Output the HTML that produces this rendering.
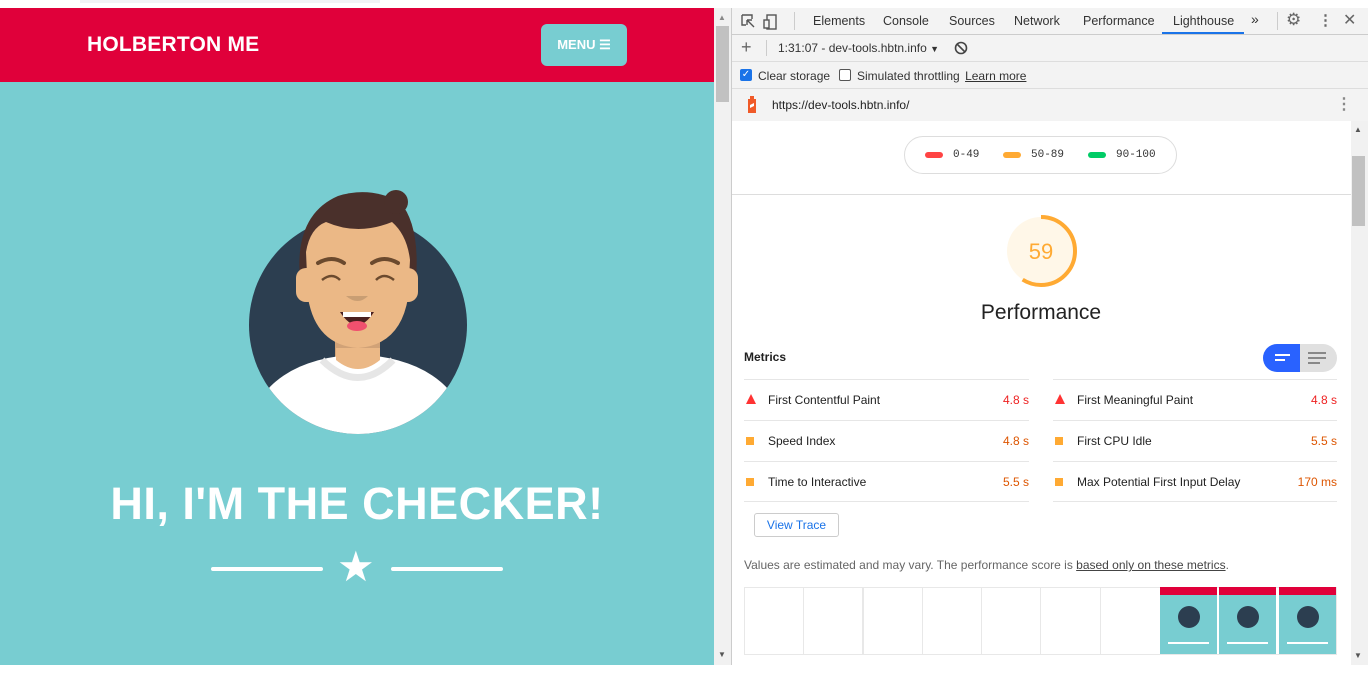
<!DOCTYPE html>
<html><head><meta charset="utf-8"><style>
*{margin:0;padding:0;box-sizing:border-box}
body{width:1368px;height:683px;overflow:hidden;background:#fff;font-family:"Liberation Sans",Arial,sans-serif;position:relative}
.a{position:absolute}
.tab{position:absolute;top:14px;font-size:12.5px;color:#333}
.mrow{position:absolute;height:41px;border-top:1px solid #e6e6e6;font-size:12px;color:#212121}
.mrow span{position:absolute;top:13px}
.tri{width:0;height:0;border-left:5px solid transparent;border-right:5px solid transparent;border-bottom:10px solid #f33;position:absolute;top:14px;left:2px}
.sq{width:8px;height:8px;background:#fa3;position:absolute;top:16px;left:2px}
.fr{position:absolute;top:587px;height:68px;border:1px solid #e8e8e8;background:#fff}
.th{position:absolute;top:587px;width:57px;height:67px;background:#78cdd1}
.th .h{height:8px;background:#e0003a}
</style></head><body>
<div class="a" style="left:0;top:0;width:715px;height:8px;background:#fff"></div>
<div class="a" style="left:80px;top:0;width:300px;height:3px;background:#f2f3f5"></div>
<div class="a" style="left:0;top:8px;width:714px;height:74px;background:#e0003a"></div>
<div class="a" style="left:87px;top:33px;color:#fff;font-weight:bold;font-size:21px;letter-spacing:0.2px">HOLBERTON ME</div>
<div class="a" style="left:541px;top:24px;width:86px;height:42px;background:#78cdd1;border-radius:6px;color:#fff;font-weight:bold;font-size:13px;line-height:42px;text-align:center">MENU &#9776;</div>
<div class="a" style="left:0;top:82px;width:714px;height:583px;background:#78cdd1"></div>
<svg class="a" style="left:240px;top:180px" width="240" height="260" viewBox="0 0 240 260">
<defs><clipPath id="c"><circle cx="118" cy="145" r="109"/></clipPath></defs>
<circle cx="118" cy="145" r="109" fill="#2c3e50"/>
<g clip-path="url(#c)">
<rect x="95" y="150" width="45" height="40" fill="#d1a277"/>
<ellipse cx="118" cy="245" rx="105" ry="70" fill="#fff"/>
<path d="M82 180 Q118 215 153 180" stroke="#e6e6e6" stroke-width="7" fill="none"/>
<path d="M96 180 Q118 198 140 180 L140 168 L96 168Z" fill="#ebb886"/>
</g>
<path d="M60 100 Q54 35 98 16 Q130 6 160 22 Q180 45 176 100 Z" fill="#4a302b"/>
<circle cx="156" cy="22" r="12" fill="#4a302b"/>
<rect x="56" y="88" width="22" height="34" rx="10" fill="#ebb886"/>
<rect x="156" y="88" width="22" height="34" rx="10" fill="#ebb886"/>
<path d="M66 72 Q70 48 86 42 Q118 56 152 42 Q167 55 170 80 L168 118 Q160 165 118 168 Q76 165 68 118Z" fill="#ebb886"/>
<path d="M78 83 Q92 75 104 83" stroke="#6b4a2e" stroke-width="4" fill="none" stroke-linecap="round"/>
<path d="M132 83 Q144 75 158 83" stroke="#6b4a2e" stroke-width="4" fill="none" stroke-linecap="round"/>
<path d="M82 100 Q92 92 100 100" stroke="#6b4a2e" stroke-width="2.5" fill="none"/>
<path d="M136 100 Q144 92 154 100" stroke="#6b4a2e" stroke-width="2.5" fill="none"/>
<path d="M106 116 Q118 126 128 116Z" fill="#c99e73"/>
<path d="M100 132 Q117 158 134 132Z" fill="#4a1f1f"/>
<rect x="103" y="132" width="28" height="5" fill="#fff"/>
<ellipse cx="117" cy="146" rx="10" ry="5" fill="#f0506e"/>
</svg>
<div class="a" style="left:0;top:478px;width:714px;text-align:center;color:#fff;font-weight:bold;font-size:45px;letter-spacing:0.5px">HI, I'M THE CHECKER!</div>
<div class="a" style="left:211px;top:567px;width:112px;height:4px;background:#fff;border-radius:2px"></div>
<div class="a" style="left:391px;top:567px;width:112px;height:4px;background:#fff;border-radius:2px"></div>
<div class="a" style="left:337px;top:546px;color:#fff;font-size:42px;line-height:42px">&#9733;</div>
<div class="a" style="left:714px;top:8px;width:17px;height:657px;background:#f1f1f1"></div>
<div class="a" style="left:716px;top:26px;width:13px;height:76px;background:#c1c1c1"></div>
<div class="a" style="left:718px;top:13px;font-size:8px;color:#888">&#9650;</div>
<div class="a" style="left:718px;top:650px;font-size:8px;color:#555">&#9660;</div>
<div class="a" style="left:731px;top:8px;width:1px;height:657px;background:#ccc"></div>
<div class="a" style="left:732px;top:8px;width:636px;height:27px;background:#f3f3f3;border-bottom:1px solid #ccc"></div>
<svg class="a" style="left:740px;top:13px" width="40" height="18"><path d="M2 2h10v4M2 2v10h4M7 7l7 7M7 7h5M7 7v5" stroke="#555" stroke-width="1.4" fill="none"/><rect x="27" y="2" width="9" height="14" fill="none" stroke="#555" stroke-width="1.4"/><rect x="24" y="7" width="5" height="8" fill="#f3f3f3" stroke="#555" stroke-width="1.4"/></svg>
<div class="a" style="left:794px;top:12px;width:1px;height:18px;background:#ccc"></div>
<div class="tab" style="left:813px">Elements</div>
<div class="tab" style="left:883px">Console</div>
<div class="tab" style="left:949px">Sources</div>
<div class="tab" style="left:1014px">Network</div>
<div class="tab" style="left:1083px">Performance</div>
<div class="tab" style="left:1173px">Lighthouse</div>
<div class="a" style="left:1162px;top:32px;width:82px;height:2px;background:#1a73e8"></div>
<div class="tab" style="left:1251px;top:11px;font-size:14px">&raquo;</div>
<div class="a" style="left:1277px;top:12px;width:1px;height:18px;background:#ccc"></div>
<div class="tab" style="left:1286px;top:10px;font-size:17px;color:#666">&#9881;</div>
<div class="tab" style="left:1318px;top:11px;font-size:15px;color:#666;font-weight:bold">&#8942;</div>
<div class="tab" style="left:1343px;top:10px;font-size:16px;color:#666">&#10005;</div>
<div class="a" style="left:732px;top:35px;width:636px;height:27px;background:#f3f3f3;border-bottom:1px solid #ddd"></div>
<div class="a" style="left:741px;top:37px;font-size:18px;color:#666">+</div>
<div class="a" style="left:766px;top:40px;width:1px;height:16px;background:#ccc"></div>
<div class="a" style="left:778px;top:41px;font-size:12px;color:#333">1:31:07 - dev-tools.hbtn.info <span style="font-size:9px">&#9660;</span></div>
<svg class="a" style="left:954px;top:41px" width="14" height="14"><circle cx="7" cy="7" r="5.5" stroke="#444" stroke-width="1.6" fill="none"/><path d="M3 3l8 8" stroke="#444" stroke-width="1.6"/></svg>
<div class="a" style="left:732px;top:62px;width:636px;height:27px;background:#f3f3f3;border-bottom:1px solid #ddd"></div>
<div class="a" style="left:740px;top:69px;width:12px;height:12px;background:#1a73e8;border-radius:2px;color:#fff;font-size:10px;line-height:12px;text-align:center">&#10003;</div>
<div class="a" style="left:758px;top:69px;font-size:12px;color:#333">Clear storage</div>
<div class="a" style="left:839px;top:69px;width:12px;height:12px;border:1px solid #555;border-radius:2px;background:#fff"></div>
<div class="a" style="left:857px;top:69px;font-size:12px;color:#333">Simulated throttling <span style="text-decoration:underline;margin-left:2px">Learn more</span></div>
<div class="a" style="left:732px;top:89px;width:636px;height:32px;background:#f3f3f3"></div>
<svg class="a" style="left:745px;top:95px" width="14" height="20"><rect x="3" y="4" width="8" height="14" fill="#f05a28"/><rect x="5" y="1" width="4" height="4" fill="#f05a28"/><path d="M5 10l4-2v3l-4 2z" fill="#fff"/></svg>
<div class="a" style="left:772px;top:98px;font-size:12px;color:#222">https://dev-tools.hbtn.info/</div>
<div class="a" style="left:1336px;top:94px;font-size:16px;color:#888;font-weight:bold">&#8942;</div>
<div class="a" style="left:1351px;top:121px;width:17px;height:544px;background:#f1f1f1"></div>
<div class="a" style="left:1352px;top:156px;width:13px;height:70px;background:#c1c1c1"></div>
<div class="a" style="left:1354px;top:125px;font-size:8px;color:#555">&#9650;</div>
<div class="a" style="left:1354px;top:651px;font-size:8px;color:#555">&#9660;</div>
<div class="a" style="left:904px;top:136px;width:273px;height:38px;border:1px solid #ddd;border-radius:19px"></div>
<div class="a" style="left:925px;top:152px;width:18px;height:6px;border-radius:3px;background:#f44"></div>
<div class="a" style="left:953px;top:149px;font-family:'Liberation Mono',monospace;font-size:11px;color:#333">0-49</div>
<div class="a" style="left:1003px;top:152px;width:18px;height:6px;border-radius:3px;background:#fa3"></div>
<div class="a" style="left:1031px;top:149px;font-family:'Liberation Mono',monospace;font-size:11px;color:#333">50-89</div>
<div class="a" style="left:1088px;top:152px;width:18px;height:6px;border-radius:3px;background:#0c6"></div>
<div class="a" style="left:1116px;top:149px;font-family:'Liberation Mono',monospace;font-size:11px;color:#333">90-100</div>
<div class="a" style="left:732px;top:194px;width:619px;height:1px;background:#ddd"></div>
<svg class="a" style="left:1003px;top:213px" width="76" height="76"><circle cx="38" cy="38" r="34" fill="#fff7e8"/><circle cx="38" cy="38" r="34" fill="none" stroke="#fa3" stroke-width="4" stroke-dasharray="126 300" transform="rotate(-90 38 38)"/><text x="38" y="46" text-anchor="middle" font-family="Liberation Sans" font-size="22" fill="#fa3">59</text></svg>
<div class="a" style="left:932px;top:301px;width:218px;text-align:center;font-size:21px;color:#222">Performance</div>
<div class="a" style="left:744px;top:350px;font-size:12px;font-weight:bold;color:#212121">Metrics</div>
<div class="a" style="left:1263px;top:344px;width:74px;height:28px;border-radius:14px;background:#e0e0e0;overflow:hidden"><div style="width:37px;height:28px;background:#2962ff"></div></div>
<div class="a" style="left:1275px;top:354px;width:15px;height:2px;background:#fff"></div><div class="a" style="left:1275px;top:359px;width:10px;height:2px;background:#fff"></div>
<div class="a" style="left:1308px;top:352px;width:18px;height:2px;background:#888"></div><div class="a" style="left:1308px;top:357px;width:18px;height:2px;background:#888"></div><div class="a" style="left:1308px;top:362px;width:12px;height:2px;background:#888"></div>
<div class="mrow" style="left:744px;top:379px;width:285px"><i class="tri"></i><span style="left:24px">First Contentful Paint</span><span style="right:0;color:#e22">4.8 s</span></div>
<div class="mrow" style="left:1053px;top:379px;width:284px"><i class="tri"></i><span style="left:24px">First Meaningful Paint</span><span style="right:0;color:#e22">4.8 s</span></div>
<div class="mrow" style="left:744px;top:420px;width:285px"><i class="sq"></i><span style="left:24px">Speed Index</span><span style="right:0;color:#d50">4.8 s</span></div>
<div class="mrow" style="left:1053px;top:420px;width:284px"><i class="sq"></i><span style="left:24px">First CPU Idle</span><span style="right:0;color:#d50">5.5 s</span></div>
<div class="mrow" style="left:744px;top:461px;width:285px;border-bottom:1px solid #e6e6e6"><i class="sq"></i><span style="left:24px">Time to Interactive</span><span style="right:0;color:#d50">5.5 s</span></div>
<div class="mrow" style="left:1053px;top:461px;width:284px;border-bottom:1px solid #e6e6e6"><i class="sq"></i><span style="left:24px">Max Potential First Input Delay</span><span style="right:0;color:#d50">170 ms</span></div>
<div class="a" style="left:754px;top:513px;width:85px;height:24px;border:1px solid #ccc;border-radius:3px;font-size:12px;color:#1a73e8;text-align:center;line-height:22px">View Trace</div>
<div class="a" style="left:744px;top:558px;font-size:12px;color:#666">Values are estimated and may vary. The performance score is <span style="text-decoration:underline;color:#444">based only on these metrics</span>.</div>
<div class="fr" style="left:744px;width:60px"></div>
<div class="fr" style="left:803px;width:60px"></div>
<div class="fr" style="left:863px;width:60px"></div>
<div class="fr" style="left:922px;width:60px"></div>
<div class="fr" style="left:981px;width:60px"></div>
<div class="fr" style="left:1040px;width:61px"></div>
<div class="fr" style="left:1100px;width:237px"></div>
<div class="th" style="left:1160px"><div class="h"></div><div style="width:22px;height:22px;border-radius:50%;background:#2c3e50;margin:11px auto 0"></div><div style="height:2px;background:#fff;margin:14px 8px 0"></div></div>
<div class="th" style="left:1219px"><div class="h"></div><div style="width:22px;height:22px;border-radius:50%;background:#2c3e50;margin:11px auto 0"></div><div style="height:2px;background:#fff;margin:14px 8px 0"></div></div>
<div class="th" style="left:1279px"><div class="h"></div><div style="width:22px;height:22px;border-radius:50%;background:#2c3e50;margin:11px auto 0"></div><div style="height:2px;background:#fff;margin:14px 8px 0"></div></div>
</body></html>
